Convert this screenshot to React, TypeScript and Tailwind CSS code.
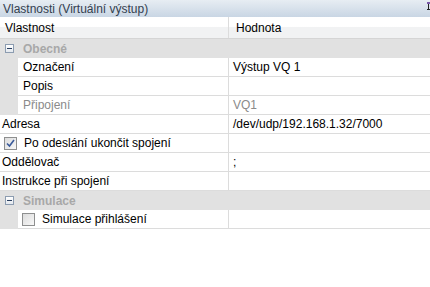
import React from "react";

const font = { fontFamily: '"Liberation Sans", Arial, sans-serif' };

function Minus() {
  return (
    <div className="w-[9px] h-[9px] border border-[#8c9cb0] bg-gradient-to-b from-white to-[#e3e8ee] flex items-center justify-center">
      <div className="w-[5px] h-px bg-[#2a3f5f]" />
    </div>
  );
}

function Check({ checked }: { checked?: boolean }) {
  return (
    <div className="w-[13px] h-[13px] border border-[#8e8f8f] bg-gradient-to-br from-[#dcdcdc] to-[#f8f8f8] flex items-center justify-center shrink-0">
      {checked && (
        <svg width="9" height="9" viewBox="0 0 9 9">
          <path d="M1 4.5 L3.5 7 L8 1" fill="none" stroke="#3a5a9a" strokeWidth="1.6" />
        </svg>
      )}
    </div>
  );
}

function Category({ label }: { label: string }) {
  return (
    <div className="h-[19px] bg-[#e1e1e1] flex items-center">
      <div className="w-[18px] flex justify-center pl-px">
        <Minus />
      </div>
      <span className="pl-[5px] font-bold text-[#a8a8a8]">{label}</span>
    </div>
  );
}

function Row({
  name,
  value,
  nested,
  gray,
  checkbox,
  checked,
}: {
  name: string;
  value?: string;
  nested?: boolean;
  gray?: boolean;
  checkbox?: boolean;
  checked?: boolean;
}) {
  return (
    <div className="h-[19px] flex">
      {nested && <div className="w-[18px] bg-[#e1e1e1] shrink-0" />}
      <div className="flex-1 flex border-b border-[#dcdcdc]">
        <div
          className={`${nested ? "w-[211px] pl-[5px]" : "w-[229px] pl-[2px]"} border-r border-[#dcdcdc] flex items-center gap-[7px] shrink-0 ${gray ? "text-[#8a8a8a]" : "text-black"}`}
        >
          {checkbox && (
            <div className={nested ? "-ml-px" : "ml-[2px]"}>
              <Check checked={checked} />
            </div>
          )}
          <span>{name}</span>
        </div>
        <div className={`flex-1 flex items-center pl-[4px] ${gray ? "text-[#8a8a8a]" : "text-black"}`}>
          {value}
        </div>
      </div>
    </div>
  );
}

export default function App() {
  return (
    <div className="w-[430px] h-[287px] bg-white text-[12px] leading-none overflow-hidden relative" style={font}>
      <div className="h-[17px] bg-gradient-to-b from-[#e7edf3] to-[#c9d6e4] flex items-center pl-[3px] text-[#33404f]">
        Vlastnosti (Virtuální výstup)
      </div>
      <div className="absolute right-0 top-[2px] w-[3px] h-[8px] flex flex-col">
        <div className="h-[2px] bg-[#7a5aa8]" />
        <div className="flex-1 w-px ml-px bg-[#222]" />
        <div className="h-px bg-[#222]" />
      </div>
      <div className="h-[22px] flex border-b border-[#d5d5d5] bg-[linear-gradient(to_bottom,#ffffff_0%,#ffffff_45%,#f1f2f3_50%,#f1f2f3_100%)]">
        <div className="w-[229px] border-r border-[#dcdcdc] flex items-center pl-[5px] text-black">Vlastnost</div>
        <div className="flex-1 flex items-center pl-[7px] text-black">Hodnota</div>
      </div>
      <Category label="Obecné" />
      <Row nested name="Označení" value="Výstup VQ 1" />
      <Row nested name="Popis" value="" />
      <Row nested gray name="Připojení" value="VQ1" />
      <Row name="Adresa" value="/dev/udp/192.168.1.32/7000" />
      <Row name="Po odeslání ukončit spojení" value="" checkbox checked />
      <Row name="Oddělovač" value=";" />
      <Row name="Instrukce při spojení" value="" />
      <Category label="Simulace" />
      <Row nested name="Simulace přihlášení" value="" checkbox />
    </div>
  );
}
